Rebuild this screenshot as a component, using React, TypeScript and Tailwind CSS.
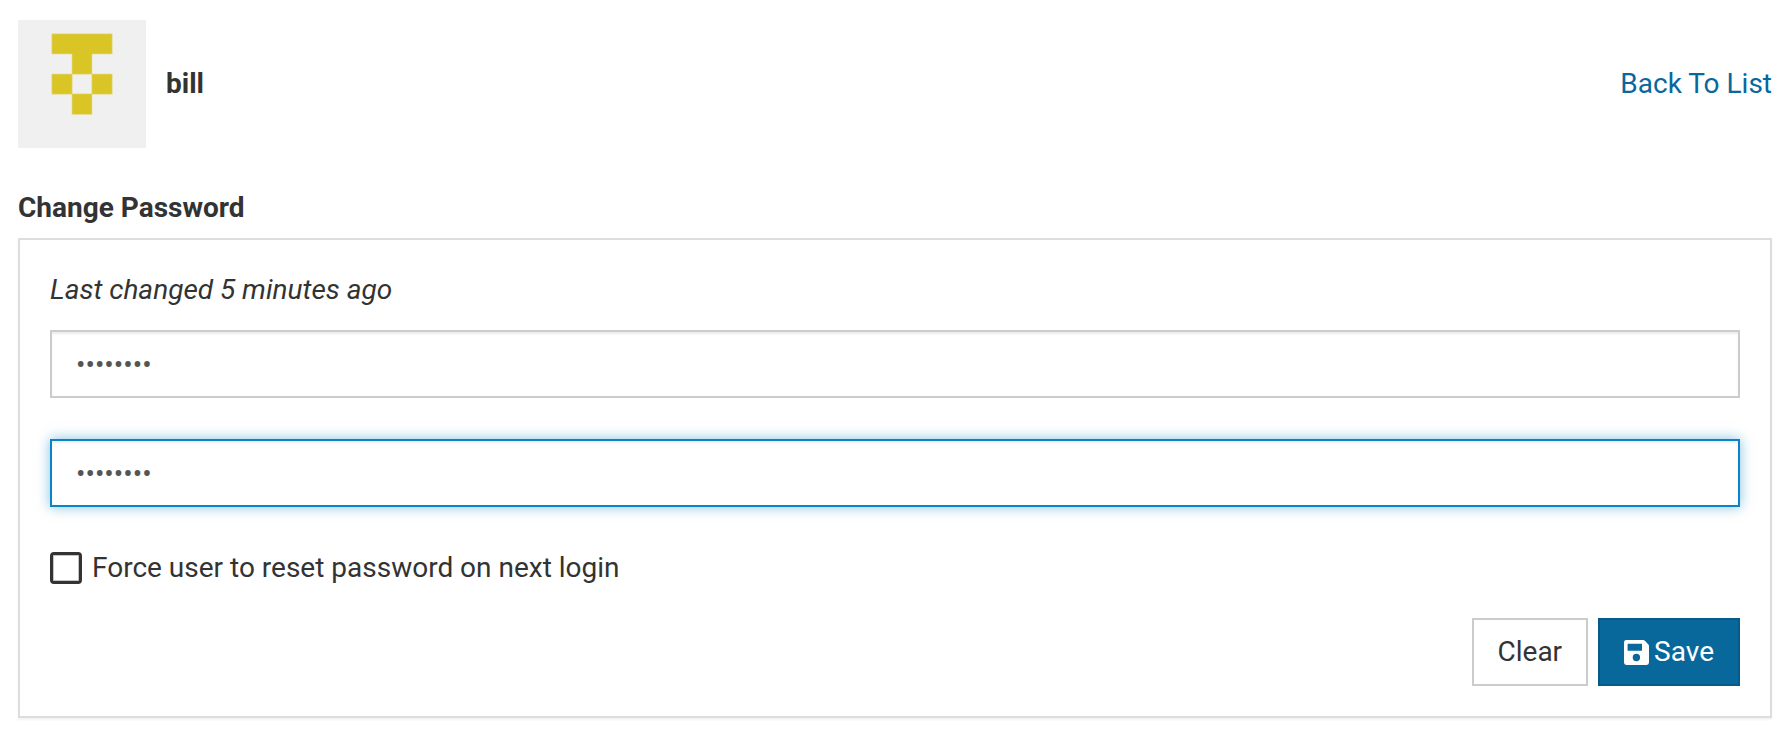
import { useState } from "react";

const fieldBase =
  "block h-[68px] w-full border-2 bg-white px-6 text-[28px] leading-10 text-[#555555] outline-none";
const fieldIdle =
  "border-[#cccccc] shadow-[inset_0_2px_2px_rgba(0,0,0,0.075)]";
const fieldActive =
  "border-[#0a84c6] shadow-[inset_0_2px_2px_rgba(0,0,0,0.075),0_0_12px_rgba(10,132,198,0.5)]";

function Avatar() {
  return (
    <svg viewBox="0 0 128 128" className="size-32 shrink-0 bg-[#f0f0f0]" role="img" aria-label="bill">
      <path
        fill="#d9c526"
        stroke="#e6de9a"
        strokeWidth="0.6"
        d="M33.8 13.8H94.2V34H74V54H94.2V74.2H74V94.4H54V74.2H33.8V54H54V34H33.8Z"
      />
      <path fill="#f0f0f0" stroke="#e6de9a" strokeWidth="0.6" d="M54.2 54.2H73.8V73.8H54.2Z" />
    </svg>
  );
}

function SaveIcon() {
  return (
    <svg viewBox="0 0 25 25" className="size-[25px]" aria-hidden="true">
      <path
        fill="#ffffff"
        fillRule="evenodd"
        d="M2.4 0H19.2Q20 0 20.6 0.6L24.4 4.4Q25 5 25 5.8V22.6A2.4 2.4 0 0 1 22.6 25H2.4A2.4 2.4 0 0 1 0 22.6V2.4A2.4 2.4 0 0 1 2.4 0ZM3.6 3.8V10.8H18V3.8ZM12.4 13.8A3.7 3.7 0 1 0 12.4 21.2A3.7 3.7 0 1 0 12.4 13.8Z"
      />
    </svg>
  );
}

export default function App() {
  const [password, setPassword] = useState("password");
  const [confirm, setConfirm] = useState("password");
  const [active, setActive] = useState("confirm");
  const [force, setForce] = useState(false);

  const clear = () => {
    setPassword("");
    setConfirm("");
  };

  return (
    <main className="py-5 pr-5 pl-[18px] font-[Roboto,sans-serif] text-[28px] leading-10 text-[#333333]">
      <header className="flex items-center gap-5">
        <Avatar />
        <h1 className="grow font-bold">bill</h1>
        <a href="#users" className="text-[#08689c]">
          Back To List
        </a>
      </header>

      <section className="mt-10">
        <h2 className="mb-2.5 font-bold">Change Password</h2>
        <form
          onSubmit={(e) => e.preventDefault()}
          className="border-2 border-[#dddddd] bg-white p-[30px] shadow-[0_2px_2px_rgba(0,0,0,0.05)]"
        >
          <p className="mb-5 italic">Last changed 5 minutes ago</p>
          <div className="flex flex-col gap-[41px]">
            <input
              type="password"
              aria-label="New password"
              value={password}
              onChange={(e) => setPassword(e.target.value)}
              onFocus={() => setActive("password")}
              className={`${fieldBase} ${active === "password" ? fieldActive : fieldIdle}`}
            />
            <input
              type="password"
              aria-label="Confirm password"
              value={confirm}
              onChange={(e) => setConfirm(e.target.value)}
              onFocus={() => setActive("confirm")}
              className={`${fieldBase} ${active === "confirm" ? fieldActive : fieldIdle}`}
            />
            <label className="flex items-center gap-2.5 self-start">
              <input
                type="checkbox"
                checked={force}
                onChange={(e) => setForce(e.target.checked)}
                className="size-8 appearance-none rounded-[4px] border-[3px] border-[#333333] shadow-[inset_0_0_0_1px_#c4c4c4] checked:bg-[#333333]"
              />
              Force user to reset password on next login
            </label>
          </div>
          <div className="mt-[30px] flex justify-end gap-2.5">
            <button
              type="button"
              onClick={clear}
              className="h-[68px] border-2 border-[#cccccc] bg-white px-6"
            >
              Clear
            </button>
            <button
              type="submit"
              className="flex h-[68px] items-center gap-[5px] border-2 border-[#075a87] bg-[#08689c] px-6 text-white"
            >
              <SaveIcon />
              Save
            </button>
          </div>
        </form>
      </section>
    </main>
  );
}
